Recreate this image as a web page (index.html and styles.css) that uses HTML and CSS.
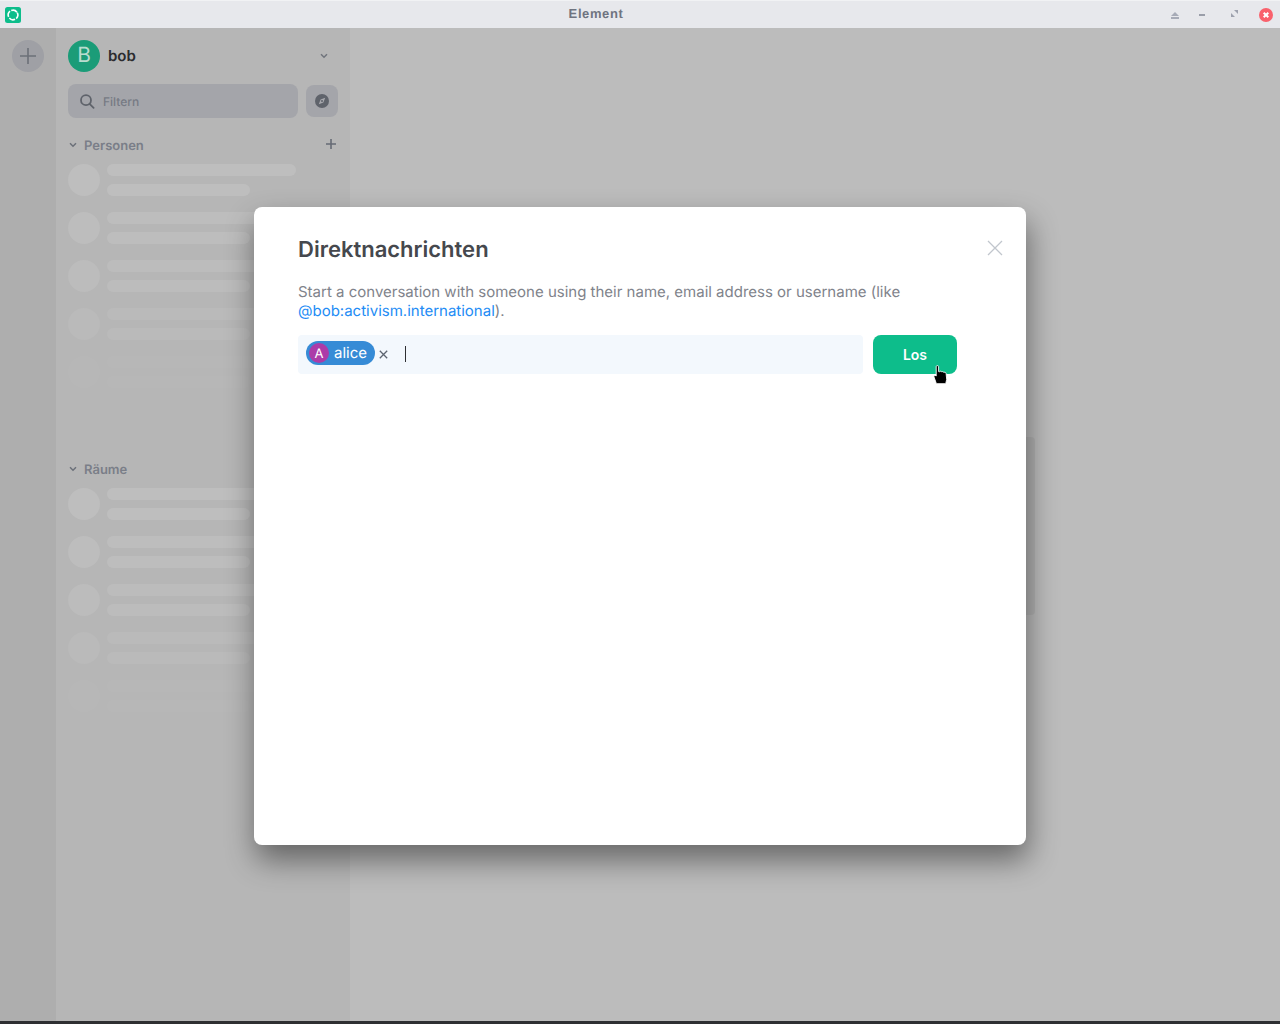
FILE: index.html
```html
<!DOCTYPE html>
<html lang="de">
<head>
<meta charset="utf-8">
<title>Element</title>
<link rel="stylesheet" href="styles.css">
</head>
<body>
<div class="app">
  <header class="titlebar">
    <svg class="app-logo" width="16" height="16" viewBox="0 0 16 16"><rect width="16" height="16" rx="2.5" fill="#0dbd8b"/><circle cx="8" cy="8" r="4.8" fill="none" stroke="#fff" stroke-width="1.6" stroke-dasharray="6.1 1.44" transform="rotate(-28 8 8)"/></svg>
    <div class="win-title">Element</div>
    <div class="win-controls">
      <svg class="win-eject" width="8" height="7" viewBox="0 0 8 7"><path d="M4 0 8 4H0Z M0 5h8v2H0Z" fill="#a7abb7"/></svg>
      <span class="win-min"></span>
      <svg class="win-max" width="7" height="7" viewBox="0 0 7 7"><path d="M3 0h4v4Z M0 3l4 4H0Z" fill="#9da1ad"/></svg>
      <svg class="win-close" width="14" height="14" viewBox="0 0 14 14"><circle cx="7" cy="7" r="7" fill="#f9616c"/><path d="M4.7 4.7l4.6 4.6M9.3 4.7 4.7 9.3" stroke="#fff" stroke-width="2"/></svg>
    </div>
  </header>
  <div class="content">
    <aside class="rail">
      <div class="rail-add"><svg width="16" height="16" viewBox="0 0 16 16"><path d="M8 0v16M0 8h16" stroke="#6c7078" stroke-width="1.6"/></svg></div>
    </aside>
    <nav class="panel">
      <div class="user-row">
        <div class="user-avatar">B</div>
        <div class="user-name">bob</div>
        <svg class="user-chevron" width="8" height="6" viewBox="0 0 8 6"><path d="M1 1.2 4 4.2 7 1.2" fill="none" stroke="#70747c" stroke-width="1.5"/></svg>
      </div>
      <div class="filter-row">
        <div class="filter">
          <svg width="15" height="15" viewBox="0 0 15 15"><circle cx="6" cy="6.2" r="5" fill="none" stroke="#5f636b" stroke-width="1.8"/><path d="M9.6 9.8l4 4" stroke="#5f636b" stroke-width="1.8" stroke-linecap="round"/></svg>
          <span class="filter-text">Filtern</span>
        </div>
        <div class="explore"><svg width="14" height="14" viewBox="0 0 14 14"><circle cx="7" cy="7" r="7" fill="#5f636b"/><path d="M10.2 3.8 8.4 8.4 3.8 10.2 5.6 5.6Z" fill="#a8a9ae"/><circle cx="7" cy="7" r="1" fill="#5f636b"/></svg></div>
      </div>
      <div class="section-head section-people">
        <svg width="8" height="6" viewBox="0 0 8 6"><path d="M1 1.2 4 4.2 7 1.2" fill="none" stroke="#6b7079" stroke-width="1.5"/></svg>
        <span class="section-label">Personen</span>
        <svg class="section-add" width="10" height="10" viewBox="0 0 10 10"><path d="M5 0v10M0 5h10" stroke="#666b75" stroke-width="1.6"/></svg>
      </div>
      <div class="skeleton skeleton-people">
        <div class="skel-row"><i class="skel-av"></i><div class="skel-bars"><b class="skel-a"></b><b class="skel-b"></b></div></div>
        <div class="skel-row"><i class="skel-av"></i><div class="skel-bars"><b class="skel-a"></b><b class="skel-b"></b></div></div>
        <div class="skel-row"><i class="skel-av"></i><div class="skel-bars"><b class="skel-a"></b><b class="skel-b"></b></div></div>
        <div class="skel-row"><i class="skel-av"></i><div class="skel-bars"><b class="skel-a"></b><b class="skel-b"></b></div></div>
        <div class="skel-row"><i class="skel-av"></i><div class="skel-bars"><b class="skel-a"></b><b class="skel-b"></b></div></div>
        <div class="skel-row"><i class="skel-av"></i><div class="skel-bars"><b class="skel-a"></b><b class="skel-b"></b></div></div>
      </div>
      <div class="section-head">
        <svg width="8" height="6" viewBox="0 0 8 6"><path d="M1 1.2 4 4.2 7 1.2" fill="none" stroke="#6b7079" stroke-width="1.5"/></svg>
        <span class="section-label">Räume</span>
      </div>
      <div class="skeleton">
        <div class="skel-row"><i class="skel-av"></i><div class="skel-bars"><b class="skel-a"></b><b class="skel-b"></b></div></div>
        <div class="skel-row"><i class="skel-av"></i><div class="skel-bars"><b class="skel-a"></b><b class="skel-b"></b></div></div>
        <div class="skel-row"><i class="skel-av"></i><div class="skel-bars"><b class="skel-a"></b><b class="skel-b"></b></div></div>
        <div class="skel-row"><i class="skel-av"></i><div class="skel-bars"><b class="skel-a"></b><b class="skel-b"></b></div></div>
        <div class="skel-row"><i class="skel-av"></i><div class="skel-bars"><b class="skel-a"></b><b class="skel-b"></b></div></div>
        <div class="skel-row"><i class="skel-av"></i><div class="skel-bars"><b class="skel-a"></b><b class="skel-b"></b></div></div>
      </div>
    </nav>
    <main class="main"></main>
  </div>
  <div class="footer"></div>
</div>
<div class="handle"></div>
<section class="dialog">
  <h1 class="dialog-title">Direktnachrichten</h1>
  <svg class="dialog-close" width="16" height="16" viewBox="0 0 16 16"><path d="M1 1l14 14M15 1 1 15" stroke="#c1c6cd" stroke-width="1.3"/></svg>
  <p class="dialog-text">Start a conversation with someone using their name, email address or username (like <a class="dialog-link">@bob:activism.international</a>).</p>
  <div class="invite-row">
    <div class="invite-field">
      <span class="pill"><span class="pill-av">A</span><span class="pill-name">alice</span></span>
      <svg class="pill-x" width="9" height="9" viewBox="0 0 9 9"><path d="M.8.8l7.4 7.4M8.2.8.8 8.2" stroke="#5c6470" stroke-width="1.3"/></svg>
      <span class="caret"></span>
    </div>
    <button class="go">Los</button>
  </div>
</section>
<svg class="cursor" width="16" height="20" viewBox="0 0 16 20"><path d="M3.2 1.6c0-1.3 2.4-1.3 2.4 0V6.6l1 .1c.5-.7 1.8-.6 2.1.2.6-.5 1.9-.3 2.1.5.7-.4 2.2 0 2.3 1l.6 6-1 4.3H3.4L1 12c-.6-1.5 1-2.2 2.2-1Z" fill="#000" stroke="#fff" stroke-width=".9"/></svg>
</body>
</html>
```
FILE: styles.css
```css
* { box-sizing: border-box; }
html, body { margin: 0; height: 100%; overflow: hidden; }
body { font-family: Inter, "Liberation Sans", sans-serif; background: #bcbcbc; text-rendering: geometricPrecision; }
.app { display: flex; flex-direction: column; height: 1024px; }
.titlebar { position: relative; height: 28px; flex: none; display: flex; align-items: center; background: #e7e8ec; border-top: 1px solid #f1f2f4; padding-left: 5px; }
.app-logo { flex: none; }
.win-title { position: absolute; left: 0; width: 1192px; top: 5px; text-align: center; font: 700 13px/16px "Liberation Sans", sans-serif; color: #6f7480; letter-spacing: .6px; }
.win-controls { margin-left: auto; display: flex; align-items: center; height: 100%; padding-right: 7px; }
.win-eject { margin-right: 20px; margin-top: 1px; }
.win-min { display: block; width: 6px; height: 2px; background: #9a9ea9; margin-right: 26px; }
.win-max { margin-right: 21px; margin-top: -2px; }
.content { flex: 1; display: flex; min-height: 0; }
.rail { width: 56px; flex: none; background: #aeaeae; padding: 12px 12px 0; }
.rail-add { width: 32px; height: 32px; border-radius: 50%; background: #9fa0a5; display: flex; align-items: center; justify-content: center; }
.panel { width: 294px; flex: none; background: #b6b6b6; padding: 12px 12px 0; }
.main { flex: 1; background: #bcbcbc; }
.footer { height: 3px; flex: none; background: #2e2f32; }
.user-row { display: flex; align-items: center; height: 32px; }
.user-avatar { width: 32px; height: 32px; border-radius: 50%; background: #1b9c78; color: #b9dccf; font-size: 21px; line-height: 32px; text-align: center; }
.user-name { margin-left: 8px; margin-top: -2px; font-weight: 600; font-size: 15px; color: #2b2c2f; }
.user-chevron { margin-left: auto; margin-right: 10px; }
.filter-row { display: flex; align-items: center; margin-top: 12px; gap: 8px; }
.filter { width: 230px; height: 34px; border-radius: 8px; background: #a4a5aa; display: flex; align-items: center; padding-left: 12px; }
.filter-text { margin-left: 8px; font-size: 12px; font-weight: 500; color: #767a84; }
.explore { width: 32px; height: 32px; border-radius: 8px; background: #a4a5aa; display: flex; align-items: center; justify-content: center; }
.section-head { display: flex; align-items: center; height: 16px; padding-left: 1px; }
.section-people { margin-top: 19px; }
.section-label { margin-left: 7px; margin-top: 2px; font-size: 13px; font-weight: 600; color: #7a7e88; }
.section-add { margin-left: auto; margin-right: 2px; margin-top: -3px; }
.skeleton { margin-top: 11px; display: flex; flex-direction: column; gap: 16px; }
.skeleton-people { height: 297px; }
.skel-row { display: flex; height: 32px; gap: 7px; }
.skel-row:nth-child(2) { opacity: .95; }
.skel-row:nth-child(3) { opacity: .8; }
.skel-row:nth-child(4) { opacity: .55; }
.skel-row:nth-child(5) { opacity: .22; }
.skel-row:nth-child(6) { opacity: .1; }
.skel-av { width: 32px; height: 32px; border-radius: 50%; background: #bebebe; flex: none; }
.skel-bars { display: flex; flex-direction: column; gap: 8px; }
.skel-a { display: block; width: 189px; height: 12px; border-radius: 6px; background: #bebebe; }
.skel-b { display: block; width: 143px; height: 12px; border-radius: 6px; background: #bebebe; }
.handle { position: absolute; left: 1000px; top: 437px; width: 35px; height: 178px; border-radius: 4px; background: rgba(0,0,0,.05); }
.dialog { position: absolute; left: 254px; top: 207px; width: 772px; height: 638px; background: #fff; border-radius: 8px; box-shadow: 2px 15px 30px rgba(0,0,0,.45); padding: 31px 44px 0; }
.dialog-title { margin: 0; font-size: 22px; line-height: 25px; font-weight: 600; color: #45484d; }
.dialog-close { position: absolute; left: 733px; top: 33px; }
.dialog-text { margin: 19px 0 0; width: 640px; font-size: 15px; line-height: 19px; color: #7f838b; }
.dialog-link { color: #238cf5; }
.invite-row { display: flex; margin-top: 15px; gap: 10px; }
.invite-field { position: relative; width: 565px; height: 39px; background: #f3f8fd; border-radius: 4px; display: flex; align-items: center; padding-left: 8px; }
.pill { display: flex; align-items: center; height: 24px; width: 69px; border-radius: 12px; background: #368bd6; margin-top: -3px; padding-left: 3px; }
.pill-av { width: 20px; height: 20px; border-radius: 50%; background: #ac3ba8; color: #fff; text-align: center; font-size: 13px; line-height: 22px; }
.pill-name { margin-left: 5px; margin-top: -1px; font-size: 15px; color: #fff; }
.pill-x { margin-left: 4px; }
.caret { width: 1px; height: 16px; background: #2e2f32; margin-left: 17px; margin-top: -2px; }
.go { width: 84px; height: 39px; border: 0; border-radius: 8px; background: #0dbd8b; color: #fff; font: 600 14px Inter, sans-serif; }
.cursor { position: absolute; left: 933px; top: 365px; }
```
